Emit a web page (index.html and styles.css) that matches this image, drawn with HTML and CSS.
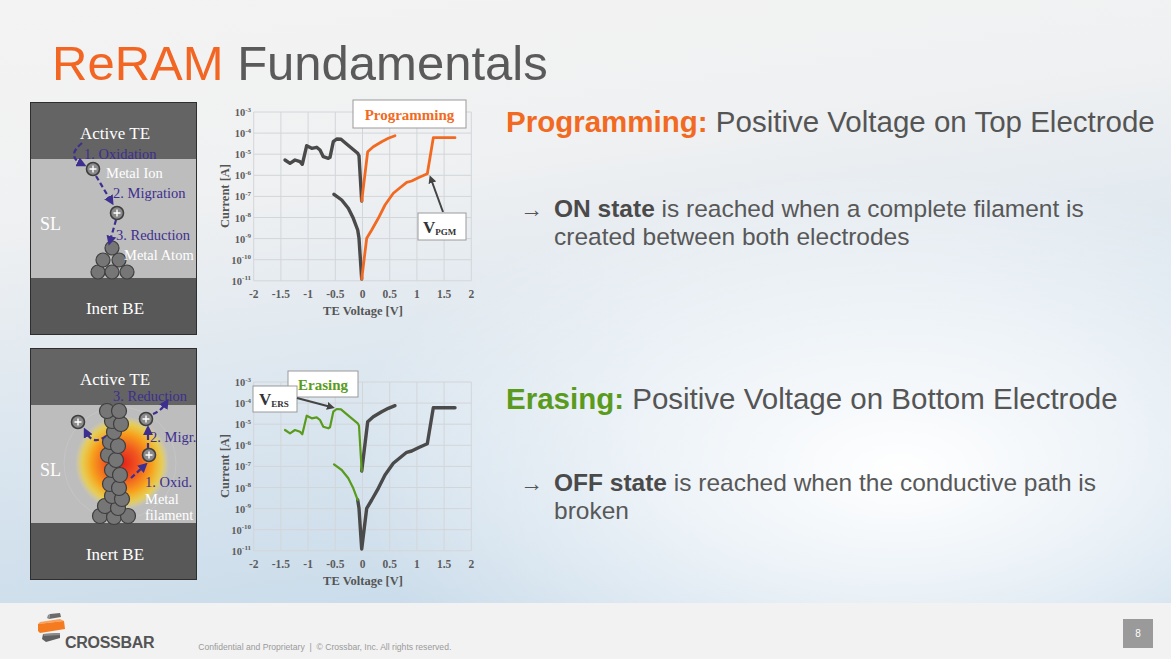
FILE: index.html
```html
<!DOCTYPE html>
<html lang="en">
<head>
<meta charset="utf-8">
<title>ReRAM Fundamentals</title>
<link rel="stylesheet" href="styles.css">
</head>
<body>
<div class="slide">
  <div class="main">
    <h1 class="title"><span class="title-accent">ReRAM</span> Fundamentals</h1>
    <div class="content">
      <div class="diagrams">
        <svg class="cell" width="167" height="233" viewBox="0 0 167 233">
          <defs>
            <marker id="ah1" viewBox="0 0 10 10" refX="5" refY="5" markerWidth="4.5" markerHeight="4.5" orient="auto-start-reverse">
              <path d="M0,0 L10,5 L0,10 z" fill="#3d2f8f"/>
            </marker>
          </defs>
          <rect x="0" y="0" width="167" height="57" fill="#646464"/>
          <rect x="0" y="57" width="167" height="119" fill="#bdbdbd"/>
          <rect x="0" y="176" width="167" height="57" fill="#585858"/>
          <rect x="0.5" y="0.5" width="166" height="232" fill="none" stroke="#2e2e2e"/>
          <text class="d-white d-big" x="85" y="37" text-anchor="middle">Active TE</text>
          <text class="d-white d-big" x="85" y="212" text-anchor="middle">Inert BE</text>
          <text class="d-white d-sl" x="10" y="128">SL</text>
          <g class="atoms">
            <circle cx="68" cy="170" r="7"/><circle cx="82" cy="170" r="7"/><circle cx="97" cy="170" r="7"/>
            <circle cx="73" cy="158" r="7"/><circle cx="89" cy="158" r="7"/>
            <circle cx="82" cy="146" r="7"/>
          </g>
          <g class="ion"><circle cx="63" cy="67" r="6.5"/><path d="M59.5,67 h7 M63,63.5 v7"/></g>
          <g class="ion"><circle cx="87" cy="111" r="6.5"/><path d="M83.5,111 h7 M87,107.5 v7"/></g>
          <path class="dash" d="M52,41 Q36,54 52,62" marker-end="url(#ah1)"/>
          <path class="dash" d="M66,74 L81,99" marker-end="url(#ah1)"/>
          <path class="dash" d="M86,118 L80,139" marker-end="url(#ah1)"/>
          <text class="d-purple" x="54" y="57">1. Oxidation</text>
          <text class="d-white" x="76" y="76">Metal Ion</text>
          <text class="d-purple" x="83" y="96">2. Migration</text>
          <text class="d-purple" x="86" y="138">3. Reduction</text>
          <text class="d-white" x="94" y="158">Metal Atom</text>
        </svg>
        <svg class="cell" width="167" height="232" viewBox="0 0 167 232">
          <defs>
            <radialGradient id="glow" cx="0.5" cy="0.5" r="0.5">
              <stop offset="0" stop-color="#e3201b"/>
              <stop offset="0.35" stop-color="#f1571f"/>
              <stop offset="0.65" stop-color="#f7a21d"/>
              <stop offset="0.85" stop-color="#f7d22a" stop-opacity="0.7"/>
              <stop offset="1" stop-color="#f7e070" stop-opacity="0"/>
            </radialGradient>
            <marker id="ah2" viewBox="0 0 10 10" refX="5" refY="5" markerWidth="4.5" markerHeight="4.5" orient="auto-start-reverse">
              <path d="M0,0 L10,5 L0,10 z" fill="#3d2f8f"/>
            </marker>
          </defs>
          <rect x="0" y="0" width="167" height="57" fill="#646464"/>
          <rect x="0" y="57" width="167" height="118" fill="#bdbdbd"/>
          <circle cx="90" cy="115" r="56" fill="none" stroke="#cacaca" stroke-width="1" opacity="0.6"/>
          <circle cx="92" cy="115" r="47" fill="url(#glow)"/>
          <rect x="0" y="175" width="167" height="57" fill="#585858"/>
          <rect x="0.5" y="0.5" width="166" height="231" fill="none" stroke="#2e2e2e"/>
          <text class="d-white d-big" x="85" y="37" text-anchor="middle">Active TE</text>
          <text class="d-white d-big" x="85" y="212" text-anchor="middle">Inert BE</text>
          <text class="d-white d-sl" x="10" y="128">SL</text>
          <g class="atoms">
            <circle cx="70" cy="168" r="7.5"/><circle cx="84" cy="169" r="7.5"/><circle cx="98" cy="168" r="7.5"/>
            <circle cx="75" cy="158" r="7.5"/><circle cx="88" cy="160" r="7.5"/>
            <circle cx="82" cy="148" r="7.5"/><circle cx="92" cy="151" r="7.5"/>
            <circle cx="80" cy="136" r="7.5"/><circle cx="89" cy="140" r="7.5"/>
            <circle cx="82" cy="122" r="7.5"/><circle cx="90" cy="127" r="7.5"/>
            <circle cx="78" cy="107" r="7.5"/><circle cx="86" cy="112" r="7.5"/>
            <circle cx="80" cy="94" r="7.5"/><circle cx="88" cy="98" r="7.5"/>
            <circle cx="84" cy="84" r="7.5"/>
            <circle cx="82" cy="73" r="7.5"/><circle cx="91" cy="76" r="7.5"/>
            <circle cx="77" cy="63" r="7.5"/><circle cx="89" cy="63" r="7.5"/>
          </g>
          <g class="ion"><circle cx="48" cy="74" r="6.5"/><path d="M44.5,74 h7 M48,70.5 v7"/></g>
          <g class="ion"><circle cx="116" cy="71" r="6.5"/><path d="M112.5,71 h7 M116,67.5 v7"/></g>
          <g class="ion"><circle cx="119" cy="107" r="6.5"/><path d="M115.5,107 h7 M119,103.5 v7"/></g>
          <path class="dash" d="M76,88 Q63,98 56,84" marker-end="url(#ah2)"/>
          <path class="dash" d="M101,130 L114,118" marker-end="url(#ah2)"/>
          <path class="dash" d="M118,100 L118,82" marker-end="url(#ah2)"/>
          <path class="dash" d="M123,66 Q131,63 136,55" marker-end="url(#ah2)"/>
          <text class="d-purple" x="83" y="53">3. Reduction</text>
          <text class="d-purple" x="120" y="94">2. Migr.</text>
          <text class="d-purple" x="115" y="139">1. Oxid.</text>
          <text class="d-white" x="115" y="156">Metal</text>
          <text class="d-white" x="115" y="172">filament</text>
        </svg>
      </div>

      <div class="charts">
        <svg class="chart" width="270" height="230" viewBox="0 0 270 230">
          <defs>
            <marker id="ch1" viewBox="0 0 10 10" refX="5" refY="5" markerWidth="4" markerHeight="4" orient="auto-start-reverse">
              <path d="M0,0 L10,5 L0,10 z" fill="#444"/>
            </marker>
          </defs>
          <g class="grid">
            <path d="M38.7,17 V185.8 M65.9,17 V185.8 M93.1,17 V185.8 M120.3,17 V185.8 M147.5,17 V185.8 M174.7,17 V185.8 M201.9,17 V185.8 M229.1,17 V185.8 M256.3,17 V185.8"/>
            <path d="M38.7,17 H256.3 M38.7,38.1 H256.3 M38.7,59.2 H256.3 M38.7,80.3 H256.3 M38.7,101.4 H256.3 M38.7,122.5 H256.3 M38.7,143.6 H256.3 M38.7,164.7 H256.3 M38.7,185.8 H256.3"/>
          </g>
          <g class="ylab">
            <text x="36" y="21">10<tspan class="sup" dy="-4.5">-3</tspan></text>
            <text x="36" y="42.1">10<tspan class="sup" dy="-4.5">-4</tspan></text>
            <text x="36" y="63.2">10<tspan class="sup" dy="-4.5">-5</tspan></text>
            <text x="36" y="84.3">10<tspan class="sup" dy="-4.5">-6</tspan></text>
            <text x="36" y="105.4">10<tspan class="sup" dy="-4.5">-7</tspan></text>
            <text x="36" y="126.5">10<tspan class="sup" dy="-4.5">-8</tspan></text>
            <text x="36" y="147.6">10<tspan class="sup" dy="-4.5">-9</tspan></text>
            <text x="36" y="168.7">10<tspan class="sup" dy="-4.5">-10</tspan></text>
            <text x="36" y="189.8">10<tspan class="sup" dy="-4.5">-11</tspan></text>
          </g>
          <g class="xlab">
            <text x="38.7" y="203">-2</text><text x="65.9" y="203">-1.5</text><text x="93.1" y="203">-1</text>
            <text x="120.3" y="203">-0.5</text><text x="147.5" y="203">0</text><text x="174.7" y="203">0.5</text>
            <text x="201.9" y="203">1</text><text x="229.1" y="203">1.5</text><text x="256.3" y="203">2</text>
          </g>
          <text class="axis-title" x="148" y="219.5" text-anchor="middle">TE Voltage [V]</text>
          <text class="axis-title" transform="translate(14,101) rotate(-90)" text-anchor="middle">Current [A]</text>
          <polyline class="c-dark" points="70,65 75,68.3 80,65 85,66.7 87.3,69.3 91.7,50.7 96.7,53.3 101.7,52.3 105,55 108.3,61.7 113.3,63.3 115,62.3 118.3,46.7 121.7,44 126,44.3 130.7,48.3 136.7,53.3 142.7,58.3 144,60.7 146.7,106"/>
          <polyline class="c-dark" points="119,99.3 126.7,105 133.3,113.3 138.3,123.3 142.7,135 144,143.3 146.7,184"/>
          <polyline class="c-orange" points="146.7,106 152.7,56.7 158.3,51.7 166.7,46.7 173.3,43.3 180,40.7"/>
          <polyline class="c-orange" points="146.7,184 151.7,143.3 156.7,135 163.3,123.3 170,110 178.3,98.3 185,92.7 191.7,87.3 196.7,86 203.3,82.7 212.3,78.7 218.3,42.7 240,42.7"/>
          <rect class="legend" x="138" y="5" width="113" height="28"/>
          <text class="legend-text orange" x="194.5" y="24.5" text-anchor="middle">Programming</text>
          <line class="pointer" x1="228" y1="117" x2="216" y2="84" marker-end="url(#ch1)"/>
          <rect class="legend" x="203" y="118" width="48" height="27"/>
          <text class="v-label" x="208" y="138">V<tspan class="v-sub" dy="2">PGM</tspan></text>
        </svg>

        <svg class="chart" width="270" height="230" viewBox="0 0 270 230">
          <defs>
            <marker id="ch2" viewBox="0 0 10 10" refX="5" refY="5" markerWidth="4" markerHeight="4" orient="auto-start-reverse">
              <path d="M0,0 L10,5 L0,10 z" fill="#444"/>
            </marker>
          </defs>
          <g class="grid">
            <path d="M38.7,17 V185.8 M65.9,17 V185.8 M93.1,17 V185.8 M120.3,17 V185.8 M147.5,17 V185.8 M174.7,17 V185.8 M201.9,17 V185.8 M229.1,17 V185.8 M256.3,17 V185.8"/>
            <path d="M38.7,17 H256.3 M38.7,38.1 H256.3 M38.7,59.2 H256.3 M38.7,80.3 H256.3 M38.7,101.4 H256.3 M38.7,122.5 H256.3 M38.7,143.6 H256.3 M38.7,164.7 H256.3 M38.7,185.8 H256.3"/>
          </g>
          <g class="ylab">
            <text x="36" y="21">10<tspan class="sup" dy="-4.5">-3</tspan></text>
            <text x="36" y="42.1">10<tspan class="sup" dy="-4.5">-4</tspan></text>
            <text x="36" y="63.2">10<tspan class="sup" dy="-4.5">-5</tspan></text>
            <text x="36" y="84.3">10<tspan class="sup" dy="-4.5">-6</tspan></text>
            <text x="36" y="105.4">10<tspan class="sup" dy="-4.5">-7</tspan></text>
            <text x="36" y="126.5">10<tspan class="sup" dy="-4.5">-8</tspan></text>
            <text x="36" y="147.6">10<tspan class="sup" dy="-4.5">-9</tspan></text>
            <text x="36" y="168.7">10<tspan class="sup" dy="-4.5">-10</tspan></text>
            <text x="36" y="189.8">10<tspan class="sup" dy="-4.5">-11</tspan></text>
          </g>
          <g class="xlab">
            <text x="38.7" y="203">-2</text><text x="65.9" y="203">-1.5</text><text x="93.1" y="203">-1</text>
            <text x="120.3" y="203">-0.5</text><text x="147.5" y="203">0</text><text x="174.7" y="203">0.5</text>
            <text x="201.9" y="203">1</text><text x="229.1" y="203">1.5</text><text x="256.3" y="203">2</text>
          </g>
          <text class="axis-title" x="148" y="219.5" text-anchor="middle">TE Voltage [V]</text>
          <text class="axis-title" transform="translate(14,101) rotate(-90)" text-anchor="middle">Current [A]</text>
          <polyline class="c-dark" points="146.7,106 152.7,56.7 158.3,51.7 166.7,46.7 173.3,43.3 180,40.7"/>
          <polyline class="c-dark" points="142.7,135 144,143.3 146.7,184 151.7,143.3 156.7,135 163.3,123.3 170,110 178.3,98.3 185,92.7 191.7,87.3 196.7,86 203.3,82.7 212.3,78.7 218.3,42.7 240,42.7"/>
          <polyline class="c-green" points="70,65 75,68.3 80,65 85,66.7 87.3,69.3 91.7,50.7 96.7,53.3 101.7,52.3 105,55 108.3,61.7 113.3,63.3 115,62.3 118.3,46.7 121.7,44 126,44.3 130.7,48.3 136.7,53.3 142.7,58.3 144,60.7 146.7,106"/>
          <polyline class="c-green" points="119,99.3 126.7,105 133.3,113.3 138.3,123.3 142.7,135"/>
          <rect class="legend" x="73" y="6" width="70" height="26"/>
          <text class="legend-text green" x="108" y="24.5" text-anchor="middle">Erasing</text>
          <rect class="legend" x="38" y="21" width="44" height="26"/>
          <text class="v-label" x="44" y="40">V<tspan class="v-sub" dy="2">ERS</tspan></text>
          <line class="pointer" x1="82" y1="33" x2="116" y2="42" marker-end="url(#ch2)"/>
        </svg>
      </div>

      <div class="texts">
        <section class="point">
          <h2 class="point-head"><span class="kw-orange">Programming:</span> Positive Voltage on Top Electrode</h2>
          <p class="bullet"><span class="arrow">→</span><span class="bullet-text"><b>ON state</b> is reached when a complete filament is created between both electrodes</span></p>
        </section>
        <section class="point point-second">
          <h2 class="point-head"><span class="kw-green">Erasing:</span> Positive Voltage on Bottom Electrode</h2>
          <p class="bullet bullet-second"><span class="arrow">→</span><span class="bullet-text"><b>OFF state</b> is reached when the conductive path is broken</span></p>
        </section>
      </div>
    </div>
  </div>

  <footer class="footer">
    <div class="logo">
      <svg class="logo-mark" width="30" height="32" viewBox="0 0 30 32">
        <polygon points="14,2 24,1 25,5 13,7" fill="#6b6b6b"/>
        <polygon points="12,3 14,2 13,7 11,6" fill="#8a8a8a"/>
        <polygon points="4,10 24,7 28,9 2,12" fill="#f9a05a"/>
        <polygon points="2,12 28,9 29,17 4,21 2,19" fill="#f47b20"/>
        <polygon points="7,22 24,21 24,26 10,30 6,27" fill="#606060"/>
        <polygon points="7,22 24,21 24,23 8,24" fill="#8c8c8c"/>
      </svg>
      <span class="logo-text">CROSSBAR</span>
    </div>
    <span class="legal">Confidential and Proprietary &nbsp;|&nbsp; © Crossbar, Inc. All rights reserved.</span>
    <span class="page-num">8</span>
  </footer>
</div>
</body>
</html>
```

FILE: styles.css
```css
html, body {
  margin: 0;
  padding: 0;
}

body {
  width: 1171px;
  height: 659px;
  overflow: hidden;
  font-family: "Liberation Sans", Arial, sans-serif;
}

.slide {
  width: 1171px;
  height: 659px;
  display: flex;
  flex-direction: column;
}

.main {
  height: 603px;
  flex: none;
  background:
    radial-gradient(ellipse 560px 300px at 900px 470px, rgba(255,255,255,1) 0%, rgba(255,255,255,0.6) 45%, rgba(255,255,255,0) 100%),
    linear-gradient(172deg, #f3f3f3 0%, #f0f1f2 28%, #dbe6ef 58%, #c2d7e8 100%);
}

.title {
  margin: 0;
  padding: 38px 0 0 52px;
  height: 50px;
  font-size: 49px;
  line-height: 50px;
  font-weight: normal;
  color: #5a5a5a;
}

.title-accent {
  color: #f26522;
}

.content {
  display: flex;
  padding-left: 30px;
}

.diagrams {
  width: 167px;
  display: flex;
  flex-direction: column;
  gap: 13px;
  padding-top: 14px;
}

.cell {
  display: block;
}

.d-white {
  fill: #ffffff;
  font-family: "Liberation Serif", "DejaVu Serif", serif;
  font-size: 14.5px;
}

.d-big {
  font-size: 17px;
}

.d-sl {
  font-size: 18px;
}

.d-purple {
  fill: #3d2f8f;
  font-family: "Liberation Serif", "DejaVu Serif", serif;
  font-size: 14.5px;
}

.atoms circle {
  fill: #767676;
  stroke: #3e3e3e;
  stroke-width: 1.2;
}

.ion circle {
  fill: #8a8a8a;
  stroke: #3e3e3e;
  stroke-width: 1.6;
}

.ion path {
  stroke: #ffffff;
  stroke-width: 1.4;
}

.dash {
  fill: none;
  stroke: #3d2f8f;
  stroke-width: 2.2;
  stroke-dasharray: 5 3;
}

.charts {
  width: 270px;
  margin-left: 18px;
  display: flex;
  flex-direction: column;
  gap: 40px;
  padding-top: 7px;
}

.chart {
  display: block;
}

.grid path {
  fill: none;
  stroke: #d3d6d9;
  stroke-width: 1;
}

.ylab text,
.xlab text,
.axis-title,
.legend-text,
.v-label {
  font-family: "Liberation Serif", "DejaVu Serif", serif;
  font-weight: bold;
}

.ylab text {
  font-size: 10.5px;
  fill: #5c5c5c;
  text-anchor: end;
}

.sup {
  font-size: 7px;
}

.xlab text {
  font-size: 11.5px;
  fill: #5c5c5c;
  text-anchor: middle;
}

.axis-title {
  font-size: 12.5px;
  fill: #555555;
}

.c-dark,
.c-orange,
.c-green {
  fill: none;
  stroke-linejoin: round;
  stroke-linecap: round;
}

.c-dark {
  stroke: #4a4a4a;
  stroke-width: 3.4;
}

.c-orange {
  stroke: #f26a21;
  stroke-width: 2.8;
}

.c-green {
  stroke: #5a9b1d;
  stroke-width: 2.2;
}

.legend {
  fill: #ffffff;
  stroke: #9a9a9a;
  stroke-width: 1;
}

.legend-text {
  font-size: 15px;
}

.legend-text.orange {
  fill: #f26a21;
}

.legend-text.green {
  fill: #5a9b1d;
}

.v-label {
  font-size: 17px;
  fill: #333333;
}

.v-sub {
  font-size: 9px;
}

.pointer {
  stroke: #444444;
  stroke-width: 2;
}

.texts {
  margin-left: 21px;
  padding-top: 17px;
  display: flex;
  flex-direction: column;
}

.point-head {
  margin: 0;
  font-size: 29.5px;
  line-height: 34px;
  font-weight: normal;
  color: #555555;
  white-space: nowrap;
}

.kw-orange {
  color: #f26a21;
  font-weight: bold;
}

.kw-green {
  color: #5a9b1d;
  font-weight: bold;
}

.bullet {
  margin: 56px 0 0 14px;
  display: flex;
  font-size: 24.5px;
  line-height: 28px;
  color: #585858;
}

.bullet b {
  color: #4a4a4a;
}

.arrow {
  flex: none;
  width: 34px;
  font-size: 23px;
  color: #555555;
}

.bullet-text {
  width: 580px;
}

.point-second {
  margin-top: 131px;
}

.bullet-second {
  margin-top: 53px;
}

.footer {
  height: 56px;
  flex: none;
  background: #f2f2f2;
  display: flex;
  align-items: flex-start;
  padding: 0 18px 0 36px;
}

.logo {
  display: flex;
  align-items: flex-end;
  margin-top: 9px;
}

.logo-mark {
  display: block;
  margin-bottom: 7px;
}

.logo-text {
  font-family: "Liberation Sans", Arial, sans-serif;
  font-weight: bold;
  font-size: 16px;
  line-height: 16px;
  color: #545454;
  margin-left: -1px;
  letter-spacing: -0.3px;
}

.legal {
  margin-left: 44px;
  margin-top: 39px;
  font-size: 8.6px;
  line-height: 10px;
  color: #9a9a9a;
}

.page-num {
  margin-left: auto;
  margin-top: 16px;
  width: 30px;
  height: 29px;
  background: #9a9a9a;
  color: #ffffff;
  font-size: 10px;
  line-height: 29px;
  text-align: center;
}
```
